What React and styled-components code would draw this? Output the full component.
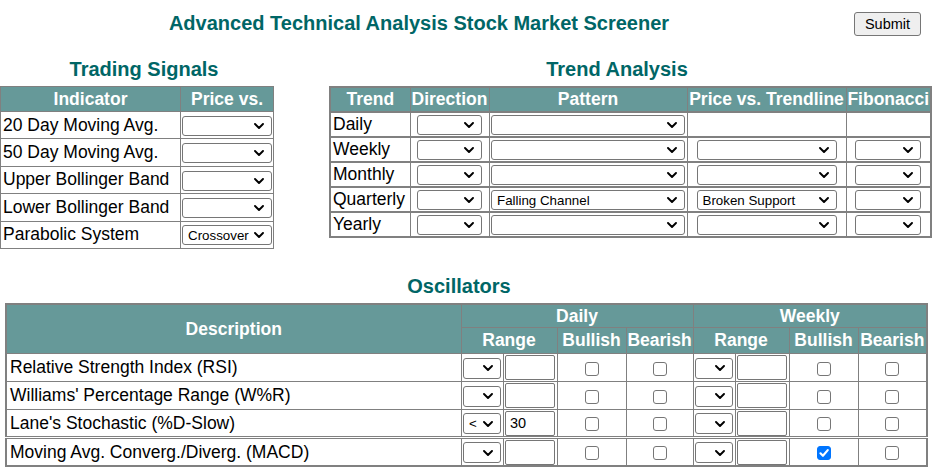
import React from 'react';
import styled, { createGlobalStyle } from 'styled-components';

const GlobalStyle = createGlobalStyle`
  body {
    margin: 0;
    background: #ffffff;
    font-family: "Liberation Sans", Arial, sans-serif;
    color: #000;
  }
`;

const chevron =
  "url(\"data:image/svg+xml;utf8,<svg xmlns='http://www.w3.org/2000/svg' width='10' height='6' viewBox='0 0 10 6'><path d='M1 1 L5 5 L9 1' fill='none' stroke='black' stroke-width='1.9' stroke-linecap='round' stroke-linejoin='round'/></svg>\")";

const tick =
  "url(\"data:image/svg+xml;utf8,<svg xmlns='http://www.w3.org/2000/svg' width='13' height='13' viewBox='0 0 13 13'><path d='M3.2 6.8 L5.5 9.1 L10 3.8' fill='none' stroke='white' stroke-width='2' stroke-linecap='round' stroke-linejoin='round'/></svg>\")";

const indicators = [
  { name: '20 Day Moving Avg.', value: '' },
  { name: '50 Day Moving Avg.', value: '' },
  { name: 'Upper Bollinger Band', value: '' },
  { name: 'Lower Bollinger Band', value: '' },
  { name: 'Parabolic System', value: 'Crossover' },
];

const trends = [
  { name: 'Daily', pattern: '', trendline: '', daily: true },
  { name: 'Weekly', pattern: '', trendline: '' },
  { name: 'Monthly', pattern: '', trendline: '' },
  { name: 'Quarterly', pattern: 'Falling Channel', trendline: 'Broken Support' },
  { name: 'Yearly', pattern: '', trendline: '' },
];

const oscillators = [
  { name: 'Relative Strength Index (RSI)' },
  { name: "Williams' Percentage Range (W%R)" },
  { name: "Lane's Stochastic (%D-Slow)", op: '<', val: '30' },
  { name: 'Moving Avg. Converg./Diverg. (MACD)', weeklyBull: true, split: true },
];

const App = () => {
  return (
    <Page>
      <GlobalStyle />
      <Header>
        <MainTitle>Advanced Technical Analysis Stock Market Screener</MainTitle>
        <SubmitCell>
          <SubmitButton type="button">Submit</SubmitButton>
        </SubmitCell>
      </Header>

      <TopRow>
        <Block $width={273}>
          <SectionTitle $shift={15}>Trading Signals</SectionTitle>
          <SignalTable>
            <colgroup>
              <col style={{ width: 180 }} />
              <col style={{ width: 93 }} />
            </colgroup>
            <thead>
              <tr>
                <Th $h={24}>Indicator</Th>
                <Th $h={24}>Price vs.</Th>
              </tr>
            </thead>
            <tbody>
              {indicators.map((row) => (
                <SignalRow key={row.name}>
                  <LabelCell>{row.name}</LabelCell>
                  <CenterCell>
                    <Select $w={90} defaultValue={row.value}>
                      <option value=""></option>
                      <option value="Above">Above</option>
                      <option value="Below">Below</option>
                      <option value="Crossover">Crossover</option>
                    </Select>
                  </CenterCell>
                </SignalRow>
              ))}
            </tbody>
          </SignalTable>
        </Block>

        <Block $width={601}>
          <SectionTitle $shift={-25}>Trend Analysis</SectionTitle>
          <TrendTable>
            <colgroup>
              <col style={{ width: 80 }} />
              <col style={{ width: 79 }} />
              <col style={{ width: 198 }} />
              <col style={{ width: 159 }} />
              <col style={{ width: 85 }} />
            </colgroup>
            <thead>
              <tr>
                <Th $h={23}>Trend</Th>
                <Th $h={23}>Direction</Th>
                <Th $h={23}>Pattern</Th>
                <Th $h={23}>Price vs. Trendline</Th>
                <Th $h={23}>Fibonacci</Th>
              </tr>
            </thead>
            <tbody>
              {trends.map((row) => (
                <TrendRow key={row.name}>
                  <LabelCell>{row.name}</LabelCell>
                  <CenterCell>
                    <Select $w={65}>
                      <option value=""></option>
                      <option>Up</option>
                      <option>Down</option>
                    </Select>
                  </CenterCell>
                  <CenterCell>
                    <Select $w={194} defaultValue={row.pattern}>
                      <option value=""></option>
                      <option value="Rising Channel">Rising Channel</option>
                      <option value="Falling Channel">Falling Channel</option>
                    </Select>
                  </CenterCell>
                  <CenterCell>
                    {!row.daily && (
                      <Select $w={140} defaultValue={row.trendline}>
                        <option value=""></option>
                        <option value="Broken Support">Broken Support</option>
                        <option value="Broken Resistance">Broken Resistance</option>
                      </Select>
                    )}
                  </CenterCell>
                  <CenterCell>
                    {!row.daily && (
                      <Select $w={66}>
                        <option value=""></option>
                        <option>38.2%</option>
                        <option>61.8%</option>
                      </Select>
                    )}
                  </CenterCell>
                </TrendRow>
              ))}
            </tbody>
          </TrendTable>
        </Block>
      </TopRow>

      <OscBlock>
        <SectionTitle $shift={-13}>Oscillators</SectionTitle>
        <OscTable>
          <colgroup>
            <col style={{ width: 455 }} />
            <col style={{ width: 42 }} />
            <col style={{ width: 54 }} />
            <col style={{ width: 69 }} />
            <col style={{ width: 67 }} />
            <col style={{ width: 42 }} />
            <col style={{ width: 54 }} />
            <col style={{ width: 69 }} />
            <col style={{ width: 69 }} />
          </colgroup>
          <thead>
            <OscHeadRow $h={24}>
              <Th rowSpan={2}>Description</Th>
              <Th colSpan={4}>Daily</Th>
              <Th colSpan={4}>Weekly</Th>
            </OscHeadRow>
            <OscHeadRow $h={26}>
              <Th colSpan={2}>Range</Th>
              <Th>Bullish</Th>
              <Th>Bearish</Th>
              <Th colSpan={2}>Range</Th>
              <Th>Bullish</Th>
              <Th>Bearish</Th>
            </OscHeadRow>
          </thead>
          <tbody>
            {oscillators.map((row) => (
              <OscRow key={row.name} $split={row.split}>
                <OscLabel>{row.name}</OscLabel>
                <CenterCell>
                  <Select $w={38} $h={21} defaultValue={row.op || ''}>
                    <option value=""></option>
                    <option value="<">&lt;</option>
                    <option value=">">&gt;</option>
                  </Select>
                </CenterCell>
                <CenterCell>
                  <RangeInput type="text" defaultValue={row.val || ''} />
                </CenterCell>
                <CenterCell>
                  <Check type="checkbox" />
                </CenterCell>
                <CenterCell>
                  <Check type="checkbox" />
                </CenterCell>
                <CenterCell>
                  <Select $w={38} $h={21}>
                    <option value=""></option>
                    <option value="<">&lt;</option>
                    <option value=">">&gt;</option>
                  </Select>
                </CenterCell>
                <CenterCell>
                  <RangeInput type="text" />
                </CenterCell>
                <CenterCell>
                  <Check type="checkbox" defaultChecked={!!row.weeklyBull} />
                </CenterCell>
                <CenterCell>
                  <Check type="checkbox" />
                </CenterCell>
              </OscRow>
            ))}
          </tbody>
        </OscTable>
      </OscBlock>
    </Page>
  );
};

export default App;

const Page = styled.div`
  width: 930px;
  font-family: "Liberation Sans", Arial, sans-serif;
`;

const Header = styled.div`
  display: flex;
  align-items: center;
  height: 46px;
`;

const MainTitle = styled.h1`
  flex: 1;
  margin: 0;
  padding-top: 1px;
  text-align: center;
  font-size: 20px;
  line-height: 23px;
  font-weight: bold;
  color: #006666;
`;

const SubmitCell = styled.div`
  width: 92px;
  padding-left: 16px;
  padding-top: 1px;
  box-sizing: border-box;
  display: flex;
  align-items: center;
`;

const SubmitButton = styled.button`
  font-family: "Liberation Sans", Arial, sans-serif;
  font-size: 14.5px;
  height: 24px;
  width: 67px;
  padding: 0 6px;
  color: #000;
  background: #efefef;
  border: 1px solid #767676;
  border-radius: 3px;
`;

const TopRow = styled.div`
  display: flex;
  justify-content: space-between;
  align-items: flex-start;
`;

const Block = styled.div`
  width: ${(p) => p.$width}px;
`;

const SectionTitle = styled.h2`
  margin: 12px 0 5px;
  text-align: center;
  font-size: 20px;
  line-height: 23px;
  font-weight: bold;
  color: #006666;
  padding-left: ${(p) => (p.$shift > 0 ? p.$shift : 0)}px;
  padding-right: ${(p) => (p.$shift < 0 ? -p.$shift : 0)}px;
`;

const BaseTable = styled.table`
  border-collapse: collapse;
  table-layout: fixed;
  font-size: 17.5px;
  width: 100%;
`;

const SignalTable = styled(BaseTable)`
  border: 1px solid #808080;

  td,
  th {
    border: 1px solid #808080;
  }
`;

const TrendTable = styled(BaseTable)`
  border: 2px solid #808080;

  td,
  th {
    border-left: 1px solid #808080;
    border-right: 1px solid #808080;
    border-top: 2px solid #808080;
    border-bottom: 2px solid #808080;
  }
  thead th {
    border-top: 2px solid #808080;
    border-bottom: 1px solid #808080;
  }
`;

const OscBlock = styled.div`
  width: 921px;
  margin-left: 5px;

  h2 {
    margin: 26px 0 5px;
  }
`;

const OscTable = styled(BaseTable)`
  border: 2px solid #808080;

  td,
  th {
    border: 1px solid #808080;
  }
`;

const Th = styled.th`
  background: #669999;
  color: #ffffff;
  font-weight: bold;
  font-size: 17.5px;
  height: ${(p) => (p.$h ? `${p.$h}px` : 'auto')};
  padding: 0;
  white-space: nowrap;
  overflow: hidden;
  text-align: center;
`;

const SignalRow = styled.tr`
  height: 27.4px;
`;

const TrendRow = styled.tr`
  height: 25px;
`;

const OscHeadRow = styled.tr`
  height: ${(p) => p.$h}px;
`;

const OscRow = styled.tr`
  height: 28px;

  td {
    border-top: ${(p) => (p.$split ? '3px double #808080' : '1px solid #808080')};
  }
`;

const LabelCell = styled.td`
  padding: 0 2px;
  white-space: nowrap;
  overflow: hidden;
  text-align: left;
  vertical-align: middle;
`;

const OscLabel = styled(LabelCell)`
  padding-left: 3px;
`;

const CenterCell = styled.td`
  padding: 0;
  text-align: center;
  vertical-align: middle;
`;

const Select = styled.select`
  appearance: none;
  -webkit-appearance: none;
  box-sizing: border-box;
  width: ${(p) => p.$w}px;
  height: ${(p) => p.$h || 20}px;
  padding: 0 20px 0 5px;
  font-family: "Liberation Sans", Arial, sans-serif;
  font-size: 13.33px;
  color: #000;
  text-align: left;
  background-color: #ffffff;
  background-image: ${chevron};
  background-repeat: no-repeat;
  background-position: right 7px center;
  background-size: 10px 6px;
  border: 1px solid #767676;
  border-radius: 3px;
  vertical-align: middle;
  margin: 0;
`;

const RangeInput = styled.input`
  width: 50px;
  height: 25px;
  box-sizing: border-box;
  font-family: "Liberation Sans", Arial, sans-serif;
  font-size: 14.5px;
  padding: 1px 4px;
  margin: 0;
  border: 1px solid #767676;
  border-radius: 2px;
  vertical-align: middle;
`;

const Check = styled.input`
  appearance: none;
  -webkit-appearance: none;
  width: 14px;
  height: 14px;
  margin: 0;
  box-sizing: border-box;
  border: 1px solid #767676;
  border-radius: 3px;
  background: #ffffff;
  vertical-align: middle;

  &:checked {
    border-color: #0075ff;
    background-color: #0075ff;
    background-image: ${tick};
    background-size: 14px 14px;
    background-position: -1px -1px;
  }
`;
